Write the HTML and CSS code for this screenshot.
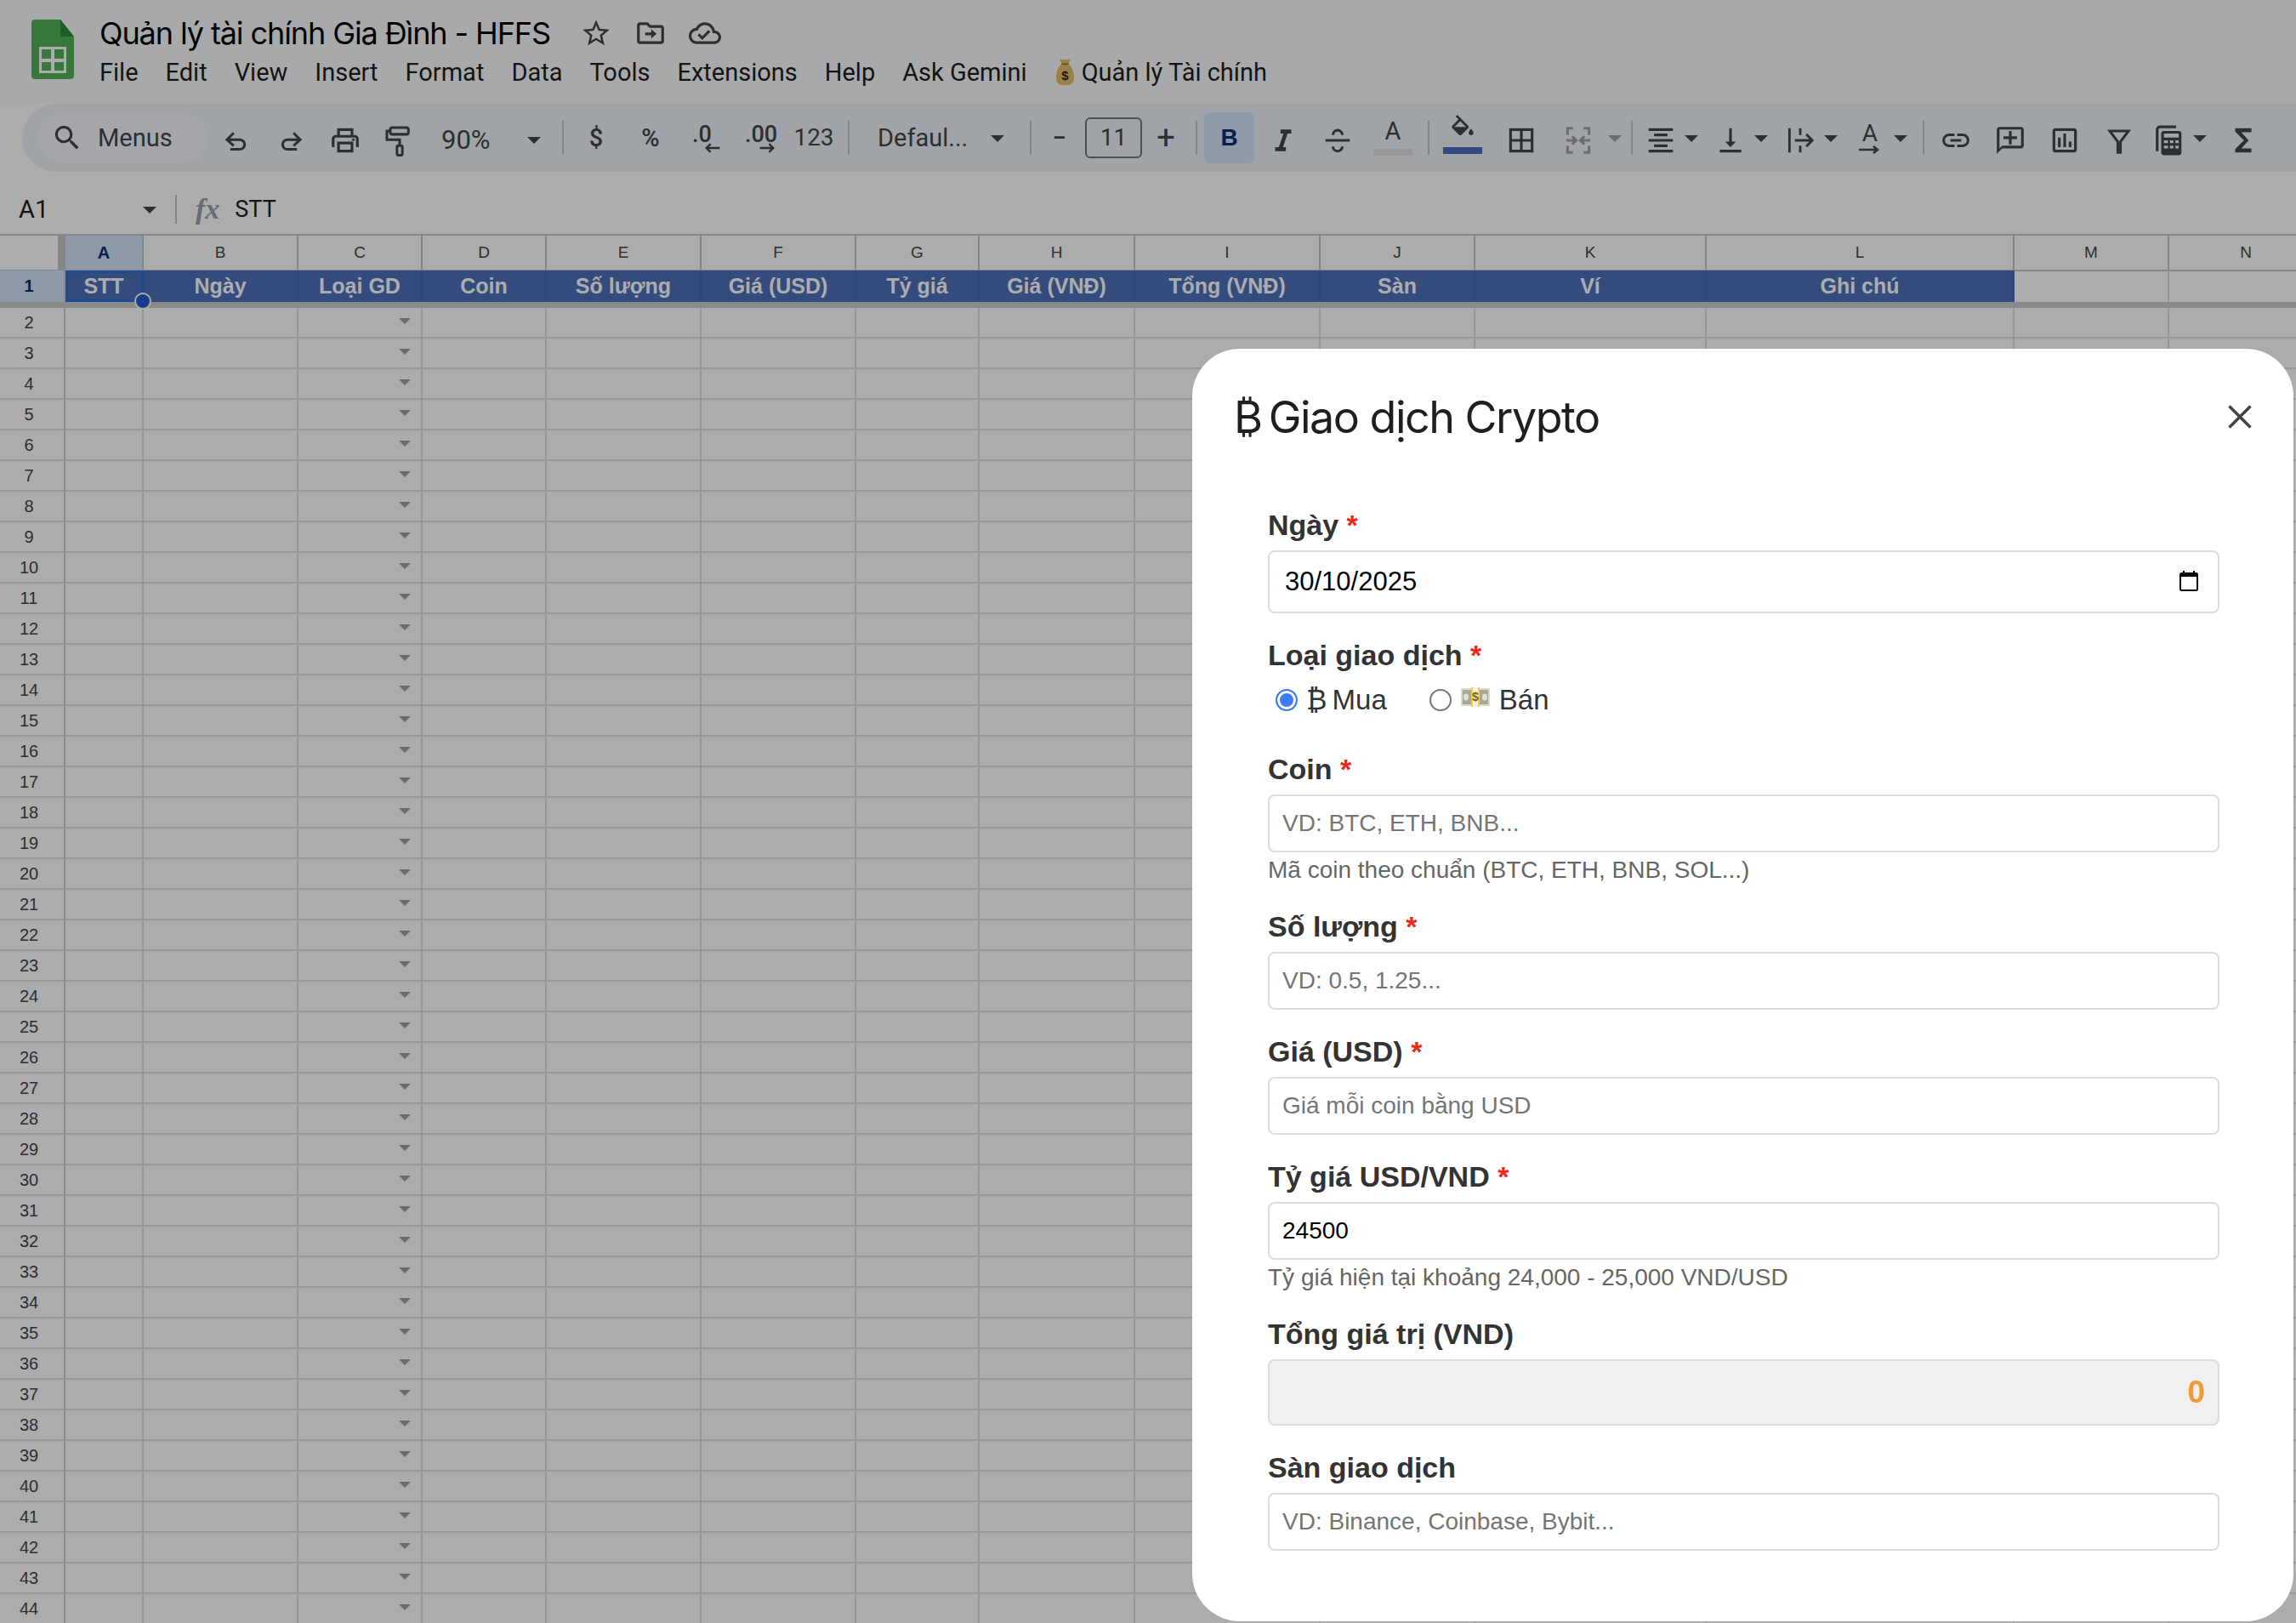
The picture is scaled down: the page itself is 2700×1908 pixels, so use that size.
FILE: index.html
```html
<!DOCTYPE html>
<html lang="vi">
  <head>
    <meta charset="UTF-8" />
    <title>Quản lý tài chính Gia Đình - HFFS</title>
    <link rel="stylesheet" href="styles.css">
  </head>
  <body>
    <!-- top bar -->
    <div class="topbar">
      <svg class="logo" viewBox="0 0 50 70"><path fill="#50b456" d="M4 0h30l16 20v46a4 4 0 0 1-4 4H4a4 4 0 0 1-4-4V4a4 4 0 0 1 4-4z"/><path fill="#2f8a3c" d="M34 0l16 20H34z"/><path fill="#fff" d="M9 32h32v31H9zm3 3v11h11V35zm15 0v11h11V35zM12 50v10h11V50zm15 0v10h11V50z"/></svg>
      <div class="doc">
        <div class="title-row">
          <span class="doc-title">Quản lý tài chính Gia Đình - HFFS</span>
          <svg class="title-ic star" viewBox="0 0 24 24"><path d="M22 9.24l-7.19-.62L12 2 9.19 8.63 2 9.24l5.46 4.73L5.82 21 12 17.27 18.18 21l-1.63-7.03L22 9.24zM12 15.4l-3.76 2.27 1-4.28-3.32-2.88 4.38-.38L12 6.1l1.71 4.04 4.38.38-3.32 2.88 1 4.28L12 15.4z"/></svg>
          <svg class="title-ic" viewBox="0 0 24 24"><path d="M20 6h-8l-2-2H4c-1.1 0-2 .9-2 2v12c0 1.1.9 2 2 2h16c1.1 0 2-.9 2-2V8c0-1.1-.9-2-2-2zm0 12H4V6h5.17l2 2H20v10zM12.5 16l4-3.5-4-3.5v2.5H8v2h4.500z"/></svg>
          <svg class="title-ic" viewBox="0 0 24 24"><path d="M19.35 10.04C18.67 6.59 15.64 4 12 4 9.11 4 6.6 5.64 5.35 8.04 2.34 8.36 0 10.91 0 14c0 3.31 2.69 6 6 6h13c2.76 0 5-2.24 5-5 0-2.64-2.05-4.78-4.65-4.96zM19 18H6c-2.21 0-4-1.79-4-4 0-2.05 1.53-3.76 3.56-3.97l1.07-.11.5-.95C8.08 7.14 9.94 6 12 6c2.62 0 4.88 1.86 5.39 4.43l.3 1.5 1.53.11c1.56.1 2.78 1.41 2.78 2.96 0 1.65-1.35 3-3 3zm-9-3.82l-2.09-2.09L6.5 13.5 10 17l6.01-6.01-1.41-1.41z"/></svg>
        </div>
        <div class="menu">
          <span>File</span><span>Edit</span><span>View</span><span>Insert</span><span>Format</span><span>Data</span><span>Tools</span><span>Extensions</span><span>Help</span><span>Ask Gemini</span>
          <span class="menu-extra">
            <svg class="bag" viewBox="0 0 21 32"><path fill="#e6bf6c" d="M4 1c2 1 3 1 6.500 1S15 2 17 1l-2.500 6.500c4 2.500 6.500 9 6.500 15.500 0 6-3 9-7 9H7c-4 0-7-3-7-9C0 16.500 2.500 10 6.500 7.500z"/><path fill="#8a6a2a" d="M6.500 6.500h8V8h-8z"/><text x="10.500" y="26" class="bag-sign">$</text></svg>
            Quản lý Tài chính
          </span>
        </div>
      </div>
    </div>

    <!-- toolbar -->
    <div class="toolbar">
      <div class="search">
        <svg class="ic" viewBox="0 0 24 24"><path d="M15.500 14h-.79l-.28-.27A6.471 6.471 0 0 0 16 9.500 6.500 6.500 0 1 0 9.500 16c1.610 0 3.090-.59 4.230-1.570l.27.28v.79l5 4.990L20.490 19l-4.990-5zm-6 0C7.010 14 5 11.990 5 9.500S7.010 5 9.500 5 14 7.010 14 9.500 11.990 14 9.500 14z"/></svg>
        <span>Menus</span>
      </div>
      <div class="tool first"><svg class="ic line" viewBox="0 0 24 24"><path d="M10 6.500l-5 5 5 4.500M5 11.500h9.500a3.600 3.600 0 0 1 0 7.200h-7"/></svg></div>
      <div class="tool"><svg class="ic line" viewBox="0 0 24 24"><path d="M14 6.500l5 5-5 4.500M19 11.500H9.500a3.600 3.600 0 0 0 0 7.200h7"/></svg></div>
      <div class="tool"><svg class="ic" viewBox="0 0 24 24"><path d="M19 8h-1V3H6v5H5c-1.660 0-3 1.340-3 3v6h4v4h12v-4h4v-6c0-1.660-1.340-3-3-3zM8 5h8v3H8V5zm8 14H8v-4h8v4zm2-2v-4H6v4H4v-6c0-.55.45-1 1-1h14c.55 0 1 .45 1 1v6h-2z"/><circle cx="18" cy="11.500" r="1"/></svg></div>
      <div class="tool"><svg class="ic line" viewBox="0 0 24 24"><rect x="5" y="2.500" width="13.500" height="5" rx="1.500"/><path d="M5 5H2.500v6.500H12V16"/><rect x="10" y="16" width="4" height="7" rx="1"/></svg></div>
      <div class="zoom"><span>90%</span><i class="caret"></i></div>
      <i class="sep sep-zoom"></i>
      <div class="tool text">$</div>
      <div class="tool text">%</div>
      <div class="tool text small">.0<svg class="arrow" viewBox="0 0 14 10"><path d="M5 1L1 5l4 4M1 5h13"/></svg></div>
      <div class="tool text small wide">.00<svg class="arrow" viewBox="0 0 14 10"><path d="M9 1l4 4-4 4M13 5H0"/></svg></div>
      <div class="tool text num">123</div>
      <i class="sep sep-font"></i>
      <div class="font-pick"><span>Defaul...</span><i class="caret"></i></div>
      <i class="sep sep-size"></i>
      <div class="tool narrow text">−</div>
      <div class="size-box">11</div>
      <div class="tool narrow text plus">+</div>
      <i class="sep sep-bold"></i>
      <div class="tool bold">B</div>
      <div class="tool italic"><svg class="ic" viewBox="0 0 24 24"><path d="M10 4v3h2.210l-3.420 10H6v3h8v-3h-2.210l3.420-10H18V4h-8z"/></svg></div>
      <div class="tool"><svg class="ic line" viewBox="0 0 24 24"><path d="M8.500 8a3.500 3.500 0 0 1 7 0M8.500 16.500a3.500 3.500 0 0 0 7 0M3 12h18"/></svg></div>
      <div class="tool color-a"><span>A</span><i class="swatch pale"></i></div>
      <i class="sep sep-fill"></i>
      <div class="tool fill"><svg class="ic" viewBox="0 0 24 24"><path d="M16.560 8.940L7.620 0 6.210 1.410l2.380 2.380-5.150 5.150c-.59.59-.59 1.540 0 2.120l5.500 5.500c.29.29.68.44 1.060.44s.77-.15 1.060-.44l5.500-5.500c.59-.58.59-1.530 0-2.120zM5.210 10L10 5.210 14.790 10H5.210zM19 11.500s-2 2.170-2 3.500c0 1.100.9 2 2 2s2-.9 2-2c0-1.330-2-3.500-2-3.500z"/></svg><i class="swatch navy"></i></div>
      <div class="tool borders"><svg class="ic" viewBox="0 0 24 24"><path d="M3 3v18h18V3H3zm8 16H5v-6h6v6zm0-8H5V5h6v6zm8 8h-6v-6h6v6zm0-8h-6V5h6v6z"/></svg></div>
      <div class="tool merge"><svg class="ic line dim" viewBox="0 0 24 24"><path d="M8 3H4v5M4 16v5h4M16 3h4v5M20 16v5h-4M3 12h7M7.500 9l3 3-3 3M21 12h-7M16.500 9l-3 3 3 3"/></svg></div>
      <div class="tool caret-cell"><i class="caret dim"></i></div>
      <i class="sep sep-align"></i>
      <div class="tool narrow"><svg class="ic" viewBox="0 0 24 24"><path d="M7 15v2h10v-2H7zm-4 6h18v-2H3v2zm0-8h18v-2H3v2zm4-6v2h10V7H7zM3 3v2h18V3H3z"/></svg></div>
      <div class="tool caret-cell"><i class="caret"></i></div>
      <div class="tool narrow gap"><svg class="ic" viewBox="0 0 24 24"><path d="M16 13h-3V3h-2v10H8l4 4 4-4zM4 19v2h16v-2H4z"/></svg></div>
      <div class="tool caret-cell"><i class="caret"></i></div>
      <div class="tool narrow gap"><svg class="ic line thin" viewBox="0 0 24 24"><path d="M4 3v18M12 3v5M12 16v5M8 12h13M16.500 7.500L21 12l-4.500 4.500"/></svg></div>
      <div class="tool caret-cell"><i class="caret"></i></div>
      <div class="tool narrow gap rotate"><span>A</span><svg class="rot-arrow" viewBox="0 0 26 10"><path d="M0 5h22M17 1l5 4-5 4"/></svg></div>
      <div class="tool caret-cell"><i class="caret"></i></div>
      <i class="sep sep-link"></i>
      <div class="tool"><svg class="ic" viewBox="0 0 24 24"><path d="M3.900 12c0-1.710 1.390-3.100 3.100-3.100h4V7H7c-2.760 0-5 2.240-5 5s2.240 5 5 5h4v-1.900H7c-1.710 0-3.100-1.390-3.100-3.100zM8 13h8v-2H8v2zm9-6h-4v1.900h4c1.710 0 3.100 1.390 3.100 3.100s-1.390 3.100-3.100 3.100h-4V17h4c2.760 0 5-2.240 5-5s-2.240-5-5-5z"/></svg></div>
      <div class="tool"><svg class="ic" viewBox="0 0 24 24"><path d="M20 2H4c-1.100 0-2 .9-2 2v18l4-4h14c1.100 0 2-.9 2-2V4c0-1.100-.9-2-2-2zm0 14H6l-2 2V4h16v12zM11 5h2v4h4v2h-4v4h-2v-4H7V9h4z"/></svg></div>
      <div class="tool"><svg class="ic" viewBox="0 0 24 24"><path d="M9 17H7v-7h2v7zm4 0h-2V7h2v10zm4 0h-2v-4h2v4zm2 2H5V5h14v14zm0-16H5c-1.100 0-2 .9-2 2v14c0 1.100.9 2 2 2h14c1.100 0 2-.9 2-2V5c0-1.100-.9-2-2-2z"/></svg></div>
      <div class="tool"><svg class="ic line" viewBox="0 0 24 24"><path d="M5 5h14l-6 8v8h-2v-8z"/></svg></div>
      <div class="tool narrow calc"><svg class="ic" viewBox="0 0 24 24"><path d="M5 1h12v2H5a1 1 0 0 0-1 1v16H2V4a3 3 0 0 1 3-3z"/><path d="M8 5h11a2 2 0 0 1 2 2v14a2 2 0 0 1-2 2H8a2 2 0 0 1-2-2V7a2 2 0 0 1 2-2zm0 2v3h11V7zm0 5v2h3v-2zm4.500 0v2h2.500v-2zm4 0v2H19v-2zM8 16v2h3v-2zm4.500 0v2h2.500v-2zm4 0v2H19v-2z" fill-rule="evenodd"/></svg></div>
      <div class="tool caret-cell"><i class="caret"></i></div>
      <div class="tool sigma"><svg class="ic" viewBox="0 0 24 24"><path d="M18 3H6v2.500L12.500 12 6 18.500V21h12v-3h-7.500l5.500-6-5.500-6H18z"/></svg></div>
    </div>

    <!-- formula bar -->
    <div class="formula">
      <div class="name-box"><span>A1</span><i class="caret"></i></div>
      <i class="sep sep-fx"></i>
      <span class="fx">fx</span>
      <span class="formula-text">STT</span>
    </div>

    <!-- sheet -->
    <div class="sheet">
      <div class="row col-head">
        <b class="corner"></b><i class="on">A</i><i>B</i><i>C</i><i>D</i><i>E</i><i>F</i><i>G</i><i>H</i><i>I</i><i>J</i><i>K</i><i>L</i><i>M</i><i>N</i>
      </div>
      <div class="row head-row">
        <b class="on">1</b><i class="hd active">STT<em class="handle"></em></i><i class="hd">Ngày</i><i class="hd">Loại GD</i><i class="hd">Coin</i><i class="hd">Số lượng</i><i class="hd">Giá (USD)</i><i class="hd">Tỷ giá</i><i class="hd">Giá (VNĐ)</i><i class="hd">Tổng (VNĐ)</i><i class="hd">Sàn</i><i class="hd">Ví</i><i class="hd">Ghi chú</i><i></i><i></i>
      </div>
      <div class="freeze"></div>
      <div class="row"><b>2</b><i></i><i></i><i class="dd"></i><i></i><i></i><i></i><i></i><i></i><i></i><i></i><i></i><i></i><i></i><i></i></div>
      <div class="row"><b>3</b><i></i><i></i><i class="dd"></i><i></i><i></i><i></i><i></i><i></i><i></i><i></i><i></i><i></i><i></i><i></i></div>
      <div class="row"><b>4</b><i></i><i></i><i class="dd"></i><i></i><i></i><i></i><i></i><i></i><i></i><i></i><i></i><i></i><i></i><i></i></div>
      <div class="row"><b>5</b><i></i><i></i><i class="dd"></i><i></i><i></i><i></i><i></i><i></i><i></i><i></i><i></i><i></i><i></i><i></i></div>
      <div class="row"><b>6</b><i></i><i></i><i class="dd"></i><i></i><i></i><i></i><i></i><i></i><i></i><i></i><i></i><i></i><i></i><i></i></div>
      <div class="row"><b>7</b><i></i><i></i><i class="dd"></i><i></i><i></i><i></i><i></i><i></i><i></i><i></i><i></i><i></i><i></i><i></i></div>
      <div class="row"><b>8</b><i></i><i></i><i class="dd"></i><i></i><i></i><i></i><i></i><i></i><i></i><i></i><i></i><i></i><i></i><i></i></div>
      <div class="row"><b>9</b><i></i><i></i><i class="dd"></i><i></i><i></i><i></i><i></i><i></i><i></i><i></i><i></i><i></i><i></i><i></i></div>
      <div class="row"><b>10</b><i></i><i></i><i class="dd"></i><i></i><i></i><i></i><i></i><i></i><i></i><i></i><i></i><i></i><i></i><i></i></div>
      <div class="row"><b>11</b><i></i><i></i><i class="dd"></i><i></i><i></i><i></i><i></i><i></i><i></i><i></i><i></i><i></i><i></i><i></i></div>
      <div class="row"><b>12</b><i></i><i></i><i class="dd"></i><i></i><i></i><i></i><i></i><i></i><i></i><i></i><i></i><i></i><i></i><i></i></div>
      <div class="row"><b>13</b><i></i><i></i><i class="dd"></i><i></i><i></i><i></i><i></i><i></i><i></i><i></i><i></i><i></i><i></i><i></i></div>
      <div class="row"><b>14</b><i></i><i></i><i class="dd"></i><i></i><i></i><i></i><i></i><i></i><i></i><i></i><i></i><i></i><i></i><i></i></div>
      <div class="row"><b>15</b><i></i><i></i><i class="dd"></i><i></i><i></i><i></i><i></i><i></i><i></i><i></i><i></i><i></i><i></i><i></i></div>
      <div class="row"><b>16</b><i></i><i></i><i class="dd"></i><i></i><i></i><i></i><i></i><i></i><i></i><i></i><i></i><i></i><i></i><i></i></div>
      <div class="row"><b>17</b><i></i><i></i><i class="dd"></i><i></i><i></i><i></i><i></i><i></i><i></i><i></i><i></i><i></i><i></i><i></i></div>
      <div class="row"><b>18</b><i></i><i></i><i class="dd"></i><i></i><i></i><i></i><i></i><i></i><i></i><i></i><i></i><i></i><i></i><i></i></div>
      <div class="row"><b>19</b><i></i><i></i><i class="dd"></i><i></i><i></i><i></i><i></i><i></i><i></i><i></i><i></i><i></i><i></i><i></i></div>
      <div class="row"><b>20</b><i></i><i></i><i class="dd"></i><i></i><i></i><i></i><i></i><i></i><i></i><i></i><i></i><i></i><i></i><i></i></div>
      <div class="row"><b>21</b><i></i><i></i><i class="dd"></i><i></i><i></i><i></i><i></i><i></i><i></i><i></i><i></i><i></i><i></i><i></i></div>
      <div class="row"><b>22</b><i></i><i></i><i class="dd"></i><i></i><i></i><i></i><i></i><i></i><i></i><i></i><i></i><i></i><i></i><i></i></div>
      <div class="row"><b>23</b><i></i><i></i><i class="dd"></i><i></i><i></i><i></i><i></i><i></i><i></i><i></i><i></i><i></i><i></i><i></i></div>
      <div class="row"><b>24</b><i></i><i></i><i class="dd"></i><i></i><i></i><i></i><i></i><i></i><i></i><i></i><i></i><i></i><i></i><i></i></div>
      <div class="row"><b>25</b><i></i><i></i><i class="dd"></i><i></i><i></i><i></i><i></i><i></i><i></i><i></i><i></i><i></i><i></i><i></i></div>
      <div class="row"><b>26</b><i></i><i></i><i class="dd"></i><i></i><i></i><i></i><i></i><i></i><i></i><i></i><i></i><i></i><i></i><i></i></div>
      <div class="row"><b>27</b><i></i><i></i><i class="dd"></i><i></i><i></i><i></i><i></i><i></i><i></i><i></i><i></i><i></i><i></i><i></i></div>
      <div class="row"><b>28</b><i></i><i></i><i class="dd"></i><i></i><i></i><i></i><i></i><i></i><i></i><i></i><i></i><i></i><i></i><i></i></div>
      <div class="row"><b>29</b><i></i><i></i><i class="dd"></i><i></i><i></i><i></i><i></i><i></i><i></i><i></i><i></i><i></i><i></i><i></i></div>
      <div class="row"><b>30</b><i></i><i></i><i class="dd"></i><i></i><i></i><i></i><i></i><i></i><i></i><i></i><i></i><i></i><i></i><i></i></div>
      <div class="row"><b>31</b><i></i><i></i><i class="dd"></i><i></i><i></i><i></i><i></i><i></i><i></i><i></i><i></i><i></i><i></i><i></i></div>
      <div class="row"><b>32</b><i></i><i></i><i class="dd"></i><i></i><i></i><i></i><i></i><i></i><i></i><i></i><i></i><i></i><i></i><i></i></div>
      <div class="row"><b>33</b><i></i><i></i><i class="dd"></i><i></i><i></i><i></i><i></i><i></i><i></i><i></i><i></i><i></i><i></i><i></i></div>
      <div class="row"><b>34</b><i></i><i></i><i class="dd"></i><i></i><i></i><i></i><i></i><i></i><i></i><i></i><i></i><i></i><i></i><i></i></div>
      <div class="row"><b>35</b><i></i><i></i><i class="dd"></i><i></i><i></i><i></i><i></i><i></i><i></i><i></i><i></i><i></i><i></i><i></i></div>
      <div class="row"><b>36</b><i></i><i></i><i class="dd"></i><i></i><i></i><i></i><i></i><i></i><i></i><i></i><i></i><i></i><i></i><i></i></div>
      <div class="row"><b>37</b><i></i><i></i><i class="dd"></i><i></i><i></i><i></i><i></i><i></i><i></i><i></i><i></i><i></i><i></i><i></i></div>
      <div class="row"><b>38</b><i></i><i></i><i class="dd"></i><i></i><i></i><i></i><i></i><i></i><i></i><i></i><i></i><i></i><i></i><i></i></div>
      <div class="row"><b>39</b><i></i><i></i><i class="dd"></i><i></i><i></i><i></i><i></i><i></i><i></i><i></i><i></i><i></i><i></i><i></i></div>
      <div class="row"><b>40</b><i></i><i></i><i class="dd"></i><i></i><i></i><i></i><i></i><i></i><i></i><i></i><i></i><i></i><i></i><i></i></div>
      <div class="row"><b>41</b><i></i><i></i><i class="dd"></i><i></i><i></i><i></i><i></i><i></i><i></i><i></i><i></i><i></i><i></i><i></i></div>
      <div class="row"><b>42</b><i></i><i></i><i class="dd"></i><i></i><i></i><i></i><i></i><i></i><i></i><i></i><i></i><i></i><i></i><i></i></div>
      <div class="row"><b>43</b><i></i><i></i><i class="dd"></i><i></i><i></i><i></i><i></i><i></i><i></i><i></i><i></i><i></i><i></i><i></i></div>
      <div class="row"><b>44</b><i></i><i></i><i class="dd"></i><i></i><i></i><i></i><i></i><i></i><i></i><i></i><i></i><i></i><i></i><i></i></div>
    </div>

    <!-- dialog -->
    <div class="scrim"></div>
    <div class="modal">
      <div class="modal-head">
        <span class="modal-title"><span class="btc">₿</span> Giao dịch Crypto</span>
        <svg class="close" viewBox="0 0 28 28"><path d="M1.500 1.500l25 25M26.500 1.500l-25 25"/></svg>
      </div>
      <form class="form">
        <div class="field">
          <label>Ngày <span class="req">*</span></label>
          <div class="date-wrap">
            <input class="input date" type="text" value="30/10/2025" />
            <svg class="cal" viewBox="0 0 22 24"><path d="M4 0h2v2h10V0h2v2h1.500A2.500 2.500 0 0 1 22 4.500v17a2.500 2.500 0 0 1-2.500 2.500h-17A2.500 2.500 0 0 1 0 21.500v-17A2.500 2.500 0 0 1 2.500 2H4zM2 7v14.500a.5.5 0 0 0 .5.5h17a.5.5 0 0 0 .5-.5V7z"/></svg>
          </div>
        </div>
        <div class="field">
          <label class="radio-label">Loại giao dịch <span class="req">*</span></label>
          <div class="radios">
            <span class="radio-item"><input class="radio" type="radio" name="type" checked /> <span class="coin"><span class="btc-small">₿</span> Mua</span></span>
            <span class="radio-item"><input class="radio" type="radio" name="type" />
              <svg class="cash" viewBox="0 0 34 23"><rect y="1" width="34" height="21" rx="1" fill="#d9dccb"/><rect x="2" y="3" width="30" height="17" fill="#a4aa94"/><ellipse cx="6" cy="11.500" rx="3" ry="4" fill="#dfe3d2"/><ellipse cx="28" cy="11.500" rx="3" ry="4" fill="#dfe3d2"/><rect x="12" y="0" width="10" height="23" fill="#f6cb4c"/><rect x="14" y="0" width="6" height="23" fill="#f4f2e2"/><text x="17" y="16" class="cash-sign">$</text></svg>
              Bán</span>
          </div>
        </div>
        <div class="field">
          <label>Coin <span class="req">*</span></label>
          <input class="input" type="text" placeholder="VD: BTC, ETH, BNB..." />
          <div class="hint">Mã coin theo chuẩn (BTC, ETH, BNB, SOL...)</div>
        </div>
        <div class="field">
          <label>Số lượng <span class="req">*</span></label>
          <input class="input" type="text" placeholder="VD: 0.5, 1.25..." />
        </div>
        <div class="field">
          <label>Giá (USD) <span class="req">*</span></label>
          <input class="input" type="text" placeholder="Giá mỗi coin bằng USD" />
        </div>
        <div class="field">
          <label>Tỷ giá USD/VND <span class="req">*</span></label>
          <input class="input" type="text" value="24500" />
          <div class="hint">Tỷ giá hiện tại khoảng 24,000 - 25,000 VND/USD</div>
        </div>
        <div class="field">
          <label>Tổng giá trị (VND)</label>
          <input class="input total" type="text" value="0" readonly />
        </div>
        <div class="field">
          <label>Sàn giao dịch</label>
          <input class="input" type="text" placeholder="VD: Binance, Coinbase, Bybit..." />
        </div>
      </form>
    </div>
  </body>
</html>
```

FILE: styles.css
```css
html, body {
  margin: 0;
  height: 100%;
  overflow: hidden;
}
body {
  background-color: #fff;
  color: #1f1f1f;
  font-family: Roboto, "Noto Sans", sans-serif;
  width: 2700px;
  height: 1908px;
}

/* top bar */
.topbar {
  display: flex;
  height: 122px;
  background-color: #f9fbfd;
  box-sizing: border-box;
  padding: 23px 0 0 37px;
}
.logo {
  width: 50px;
  height: 70px;
  flex: none;
}
.doc {
  margin-left: 30px;
}
.title-row {
  display: flex;
  align-items: center;
  height: 32px;
}
.doc-title {
  font-family: Inter, Roboto, sans-serif;
  font-size: 36px;
  letter-spacing: -1.1px;
  color: #000;
  white-space: nowrap;
  width: 531px;
}
.title-ic {
  width: 38px;
  height: 38px;
  fill: #444746;
  margin-left: 26px;
}
.title-ic.star {
  margin-left: 34px;
}
.menu {
  display: flex;
  margin-top: 13px;
  font-size: 29px;
  color: #1f1f1f;
  white-space: nowrap;
}
.menu span {
  display: block;
  margin-right: 32px;
}
.menu .menu-extra {
  display: flex;
  align-items: center;
  margin-left: 0;
}
.bag {
  width: 21px;
  height: 32px;
  margin: -2px 9px 0 2px;
}
.bag-sign {
  font-family: "Liberation Sans", sans-serif;
  font-size: 15px;
  font-weight: 700;
  text-anchor: middle;
  fill: #2e2411;
}

/* toolbar */
.toolbar {
  display: flex;
  align-items: center;
  height: 80px;
  margin-left: 26px;
  padding-left: 19px;
  background-color: #edf2fa;
  border-radius: 40px 0 0 40px;
  color: #444746;
}
.search {
  display: flex;
  align-items: center;
  width: 199px;
  height: 57px;
  box-sizing: border-box;
  padding-left: 15px;
  background-color: #f4f6fb;
  border-radius: 28px;
  font-size: 29px;
  flex: none;
}
.search span {
  margin-left: 17px;
}
.ic {
  width: 38px;
  height: 38px;
  fill: #444746;
  flex: none;
}
.tool .ic {
  margin-top: 5px;
}
.ic.line {
  fill: none;
  stroke: #444746;
  stroke-width: 1.900;
}
.ic.thin {
  stroke-width: 1.800;
}
.ic.dim {
  stroke: #a0a0a0;
}
.tool {
  position: relative;
  display: flex;
  align-items: center;
  justify-content: center;
  width: 64px;
  height: 60px;
  flex: none;
}
.tool.first {
  margin-left: 2px;
}
.tool.narrow {
  width: 50px;
}
.tool.gap {
  margin-left: 10px;
}
.tool.text {
  font-size: 29px;
  font-weight: 500;
}
.tool.small {
  justify-content: flex-start;
  font-size: 27px;
  padding: 0 0 8px 17px;
  box-sizing: border-box;
}
.tool.small.wide {
  padding-left: 15px;
}
.tool.num {
  font-weight: 400;
  font-size: 28px;
  padding-bottom: 2px;
  box-sizing: border-box;
}
.tool.plus {
  font-size: 38px;
  font-weight: 400;
  margin-left: 3px;
}
.arrow {
  position: absolute;
  right: 14px;
  bottom: 12px;
  width: 18px;
  height: 12px;
  fill: none;
  stroke: #444746;
  stroke-width: 2;
}
.caret {
  display: block;
  width: 0;
  height: 0;
  margin-top: 2px;
  border-left: 8px solid transparent;
  border-right: 8px solid transparent;
  border-top: 8px solid #444746;
}
.caret.dim {
  border-top-color: #a0a0a0;
}
.caret-cell {
  width: 22px;
}
.sep {
  display: block;
  width: 2px;
  height: 40px;
  background-color: #c7c7c7;
  flex: none;
}
.sep-zoom { margin: 0 6px 0 10px; }
.sep-font { margin: 0 2px 0 8px; }
.sep-size { margin: 0 8px 0 8px; }
.sep-bold { margin: 0 0 0 10px; }
.sep-fill { margin: 0 0 0 8px; }
.sep-align { margin: 0 8px 0 8px; }
.sep-link { margin: 0 5px 0 15px; }
.zoom {
  display: flex;
  align-items: center;
  justify-content: space-between;
  width: 149px;
  box-sizing: border-box;
  padding: 4px 15px 0 17px;
  font-size: 31px;
}
.font-pick {
  display: flex;
  align-items: center;
  justify-content: space-between;
  width: 202px;
  box-sizing: border-box;
  padding: 0 22px 0 31px;
  font-size: 29px;
}
.size-box {
  width: 67px;
  height: 48px;
  margin-left: 5px;
  box-sizing: border-box;
  border: 2px solid #747775;
  border-radius: 6px;
  text-align: center;
  line-height: 44px;
  font-size: 28px;
  flex: none;
}
.tool.bold {
  width: 59px;
  height: 60px;
  margin-left: 8px;
  background-color: #d3e3fd;
  border-radius: 8px;
  font-family: "Liberation Sans", sans-serif;
  font-weight: 700;
  font-size: 28px;
  color: #0f2c76;
}
.tool.italic {
  margin-left: 2px;
}
.tool.color-a,
.tool.fill {
  flex-direction: column;
  height: 60px;
}
.tool.color-a {
  width: 66px;
}
.tool.fill {
  margin-left: 7px;
}
.tool.color-a span {
  font-size: 29px;
  line-height: 34px;
  margin-top: -4px;
}
.tool.fill .ic {
  width: 34px;
  height: 34px;
  margin-top: -8px;
}
.swatch {
  display: block;
  width: 46px;
  height: 8px;
  margin-top: 4px;
}
.swatch.pale {
  background-color: #e0e0e0;
}
.swatch.navy {
  background-color: #4a6db8;
}
.tool.borders {
  margin-left: 5px;
}
.tool.merge {
  margin-left: 3px;
}
.tool.rotate {
  flex-direction: column;
  font-size: 28px;
}
.tool.rotate span {
  line-height: 28px;
}
.rot-arrow {
  width: 26px;
  height: 10px;
  fill: none;
  stroke: #444746;
  stroke-width: 2.500;
}
.tool.calc {
  margin-left: 2px;
}
.tool.sigma {
  margin-left: 8px;
}

/* formula bar */
.formula {
  display: flex;
  align-items: center;
  height: 58px;
  margin-top: 15px;
  background-color: #fff;
  font-size: 29px;
}
.name-box {
  display: flex;
  align-items: center;
  justify-content: space-between;
  width: 184px;
  box-sizing: border-box;
  padding: 0 0 0 22px;
  color: #1f1f1f;
}
.sep-fx {
  height: 34px;
  margin-left: 22px;
}
.fx {
  font-family: "Liberation Serif", serif;
  font-style: italic;
  font-weight: 700;
  font-size: 34px;
  color: #9aa0a6;
  margin-left: 22px;
}
.formula-text {
  margin-left: 18px;
  color: #1f1f1f;
  font-size: 27px;
}

/* sheet */
.sheet {
  height: 1633px;
  overflow: hidden;
}
.row {
  display: grid;
  grid-template-columns: 77px 92px 182px 146px 146px 182px 182px 145px 183px 218px 182px 272px 362px 182px 182px;
  height: 36px;
  box-sizing: border-box;
  width: 2733px;
}
.row b,
.row i {
  display: block;
  box-sizing: border-box;
  border-right: 2px solid #e1e1e1;
  border-bottom: 2px solid #e1e1e1;
  font-style: normal;
  font-weight: 400;
  text-align: center;
  font-size: 19px;
  line-height: 34px;
  color: #444746;
}
.row b {
  padding-right: 7px;
  border-right-color: #d0d0d0;
  font-size: 20px;
  font-family: "Liberation Sans", sans-serif;
}
.col-head {
  height: 43px;
  border-top: 2px solid #c7c7c7;
}
.row.col-head i {
  font-family: "Liberation Sans", sans-serif;
  font-size: 19px;
  line-height: 40px;
  border-right-color: #c7c7c7;
  border-bottom-color: #c7c7c7;
}
.row.col-head .corner {
  border-right: 9px solid #c7c7c7;
  border-bottom: 2px solid #c7c7c7;
}
.row.col-head .on {
  background-color: #d3e3fd;
  color: #0f2c76;
  font-weight: 700;
  font-size: 20px;
}
.head-row {
  height: 37px;
}
.row.head-row b {
  background-color: #d3e3fd;
  color: #0f2c76;
  font-weight: 700;
  line-height: 36px;
  border-bottom: 0;
}
.row.head-row i {
  border-bottom: 0;
}
.row .hd {
  position: relative;
  background-color: #4d70bb;
  border-right-color: #466aad;
  color: #fff;
  font-family: "Liberation Sans", sans-serif;
  font-size: 25px;
  font-weight: 700;
  line-height: 37px;
}
.row .hd.active {
  z-index: 1;
  outline: 3px solid #2f6fd8;
  outline-offset: -3px;
}
.handle {
  position: absolute;
  right: -11px;
  bottom: -9px;
  width: 20px;
  height: 20px;
  box-sizing: border-box;
  background-color: #265ad4;
  border: 2px solid #fff;
  border-radius: 50%;
}
.freeze {
  height: 7px;
  background-color: #cbcbcb;
}
.row .dd {
  position: relative;
}
.row .dd::after {
  content: "";
  position: absolute;
  right: 12px;
  top: 12px;
  border-left: 7px solid transparent;
  border-right: 7px solid transparent;
  border-top: 7px solid #9e9e9e;
}

/* dialog */
.scrim {
  position: fixed;
  inset: 0;
  z-index: 5;
  background-color: rgba(0, 0, 0, 0.325);
}
.modal {
  position: fixed;
  left: 1402px;
  top: 410px;
  z-index: 6;
  width: 1295px;
  height: 1496px;
  background-color: #fff;
  border-radius: 56px;
  color: #333;
}
.modal-head {
  display: flex;
  align-items: center;
  justify-content: space-between;
  height: 160px;
  padding: 0 49px 0 49px;
}
.modal-title {
  font-family: Inter, Roboto, sans-serif;
  font-size: 52px;
  letter-spacing: -1.500px;
  color: #1f1f1f;
}
.btc {
  margin-right: -5px;
}
.close {
  width: 28px;
  height: 28px;
  fill: none;
  stroke: #444;
  stroke-width: 3.500;
}
.form {
  margin-top: 27px;
  padding: 0 87px 0 89px;
  font-family: "Liberation Sans", sans-serif;
}
.field {
  margin-bottom: 29px;
}
.field label {
  display: block;
  height: 40px;
  line-height: 40px;
  margin-bottom: 10px;
  font-size: 34px;
  font-weight: 700;
  color: #333;
}
.req {
  color: #e8291c;
}
.input {
  display: block;
  width: 100%;
  height: 68px;
  box-sizing: border-box;
  padding: 0 15px;
  border: 2px solid #ddd;
  border-radius: 8px;
  background-color: #fff;
  font-family: "Liberation Sans", sans-serif;
  font-size: 28px;
  color: #000;
  outline: none;
}
.input::placeholder {
  color: #757575;
  opacity: 1;
}
.date-wrap {
  position: relative;
}
.input.date {
  height: 74px;
  font-size: 31px;
  padding-left: 18px;
}
.cal {
  position: absolute;
  right: 25px;
  top: 24px;
  width: 22px;
  height: 24px;
}
.input.total {
  height: 78px;
  background-color: #f0f0f0;
  text-align: right;
  font-size: 37px;
  font-weight: 700;
  color: #f09a38;
}
.hint {
  height: 34px;
  line-height: 34px;
  margin-top: 4px;
  font-size: 28px;
  color: #666;
}
.field .radio-label {
  margin-bottom: 0;
}
.radios {
  display: flex;
  align-items: center;
  height: 65px;
  font-size: 33px;
  color: #333;
  padding-left: 9px;
}
.radio-item {
  display: flex;
  align-items: center;
  gap: 11px;
  margin-right: 50px;
}
.coin {
  display: block;
}
.btc-small {
  margin: 0 -3px 0 -1px;
}
.radio {
  appearance: none;
  width: 26px;
  height: 26px;
  margin: 0;
  box-sizing: border-box;
  border: 2px solid #767676;
  border-radius: 50%;
  background-color: #fff;
}
.radio:checked {
  border: 2px solid #3b7cf6;
  background-color: #3b7cf6;
  box-shadow: inset 0 0 0 3px #fff;
}
.cash {
  width: 34px;
  height: 23px;
  margin-bottom: 6px;
}
.cash-sign {
  font-family: "Liberation Sans", sans-serif;
  font-size: 14px;
  font-weight: 700;
  text-anchor: middle;
  fill: #7a5b1c;
}
```
